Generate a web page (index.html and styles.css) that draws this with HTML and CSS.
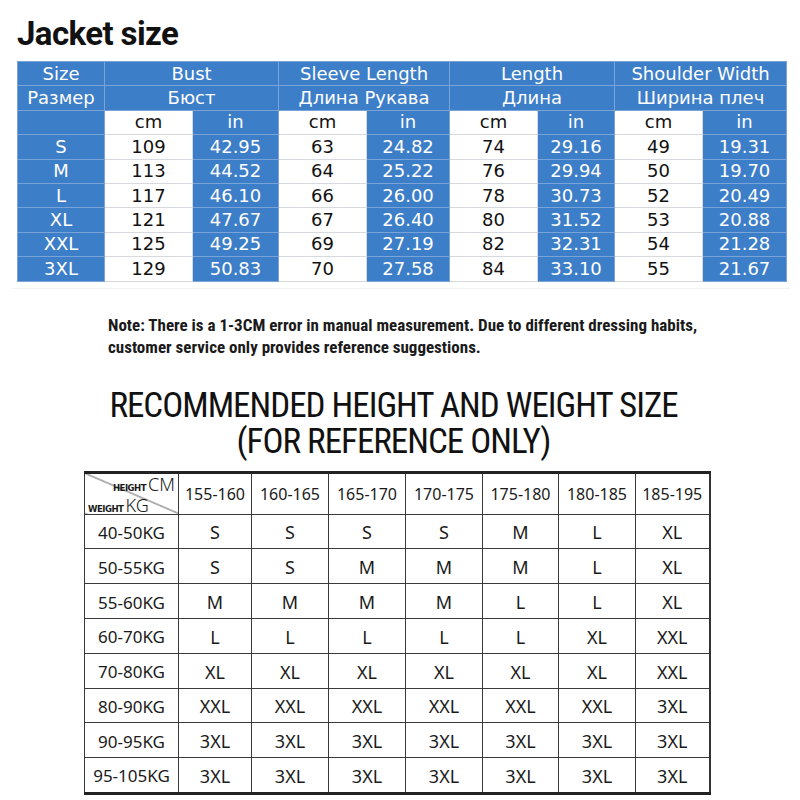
FILE: index.html
```html
<!DOCTYPE html>
<html>
<head>
<meta charset="utf-8">
<link rel="stylesheet" href="styles.css">
</head>
<body>
<div class="page">
  <h1 class="jacket-title">Jacket size</h1>
  <table class="size-table">
    <colgroup>
      <col class="c87"><col class="c88"><col class="c86"><col class="c88"><col class="c83"><col class="c88"><col class="c77"><col class="c88"><col class="c84">
    </colgroup>
    <tr><td class="b">Size</td><td class="b" colspan="2">Bust</td><td class="b" colspan="2">Sleeve Length</td><td class="b" colspan="2">Length</td><td class="b" colspan="2">Shoulder Width</td></tr>
    <tr><td class="b">Размер</td><td class="b" colspan="2">Бюст</td><td class="b" colspan="2">Длина Рукава</td><td class="b" colspan="2">Длина</td><td class="b" colspan="2">Ширина плеч</td></tr>
    <tr><td class="b"></td><td class="w">cm</td><td class="b">in</td><td class="w">cm</td><td class="b">in</td><td class="w">cm</td><td class="b">in</td><td class="w">cm</td><td class="b">in</td></tr>
    <tr><td class="b">S</td><td class="w">109</td><td class="b">42.95</td><td class="w">63</td><td class="b">24.82</td><td class="w">74</td><td class="b">29.16</td><td class="w">49</td><td class="b">19.31</td></tr>
    <tr><td class="b">M</td><td class="w">113</td><td class="b">44.52</td><td class="w">64</td><td class="b">25.22</td><td class="w">76</td><td class="b">29.94</td><td class="w">50</td><td class="b">19.70</td></tr>
    <tr><td class="b">L</td><td class="w">117</td><td class="b">46.10</td><td class="w">66</td><td class="b">26.00</td><td class="w">78</td><td class="b">30.73</td><td class="w">52</td><td class="b">20.49</td></tr>
    <tr><td class="b">XL</td><td class="w">121</td><td class="b">47.67</td><td class="w">67</td><td class="b">26.40</td><td class="w">80</td><td class="b">31.52</td><td class="w">53</td><td class="b">20.88</td></tr>
    <tr><td class="b">XXL</td><td class="w">125</td><td class="b">49.25</td><td class="w">69</td><td class="b">27.19</td><td class="w">82</td><td class="b">32.31</td><td class="w">54</td><td class="b">21.28</td></tr>
    <tr><td class="b">3XL</td><td class="w">129</td><td class="b">50.83</td><td class="w">70</td><td class="b">27.58</td><td class="w">84</td><td class="b">33.10</td><td class="w">55</td><td class="b">21.67</td></tr>
  </table>
  <div class="divider"></div>
  <p class="note">Note: There is a 1-3CM error in manual measurement. Due to different dressing habits,<br>customer service only provides reference suggestions.</p>
  <h2 class="rec-title">RECOMMENDED HEIGHT AND WEIGHT SIZE<br>(FOR REFERENCE ONLY)</h2>
  <table class="rec-table">
    <colgroup>
      <col class="r94"><col class="r73"><col class="r77"><col class="r77"><col class="r77"><col class="r76"><col class="r77"><col class="r74">
    </colgroup>
    <tr class="head">
      <td class="corner">
        <div class="corner-box">
          <div class="corner-top"><span class="tiny">HEIGHT</span><span class="unit">CM</span></div>
          <div class="corner-bottom"><span class="tiny">WEIGHT</span><span class="unit">KG</span></div>
        </div>
      </td>
      <td>155-160</td><td>160-165</td><td>165-170</td><td>170-175</td><td>175-180</td><td>180-185</td><td>185-195</td>
    </tr>
    <tr><th>40-50KG</th><td>S</td><td>S</td><td>S</td><td>S</td><td>M</td><td>L</td><td>XL</td></tr>
    <tr><th>50-55KG</th><td>S</td><td>S</td><td>M</td><td>M</td><td>M</td><td>L</td><td>XL</td></tr>
    <tr><th>55-60KG</th><td>M</td><td>M</td><td>M</td><td>M</td><td>L</td><td>L</td><td>XL</td></tr>
    <tr><th>60-70KG</th><td>L</td><td>L</td><td>L</td><td>L</td><td>L</td><td>XL</td><td>XXL</td></tr>
    <tr><th>70-80KG</th><td>XL</td><td>XL</td><td>XL</td><td>XL</td><td>XL</td><td>XL</td><td>XXL</td></tr>
    <tr><th>80-90KG</th><td>XXL</td><td>XXL</td><td>XXL</td><td>XXL</td><td>XXL</td><td>XXL</td><td>3XL</td></tr>
    <tr><th>90-95KG</th><td>3XL</td><td>3XL</td><td>3XL</td><td>3XL</td><td>3XL</td><td>3XL</td><td>3XL</td></tr>
    <tr><th>95-105KG</th><td>3XL</td><td>3XL</td><td>3XL</td><td>3XL</td><td>3XL</td><td>3XL</td><td>3XL</td></tr>
  </table>
</div>
</body>
</html>
```
FILE: styles.css
```css
html, body {
  margin: 0;
  padding: 0;
  background: #ffffff;
}
.page {
  width: 800px;
  height: 800px;
  overflow: hidden;
  box-sizing: border-box;
  padding-top: 17px;
}
.jacket-title {
  margin: 0 0 11px 17px;
  font-family: Roboto, "Liberation Sans", sans-serif;
  font-weight: 700;
  font-size: 33px;
  line-height: 33px;
  letter-spacing: -0.6px;
  color: #111;
}
.size-table {
  margin-left: 17px;
  width: 769px;
  table-layout: fixed;
  border-collapse: collapse;
  font-family: "DejaVu Sans", sans-serif;
  font-size: 18px;
}
.c87 { width: 87px; }
.c88 { width: 88px; }
.c86 { width: 86px; }
.c83 { width: 83px; }
.c77 { width: 77px; }
.c84 { width: 84px; }
.size-table td {
  height: 23.4px;
  padding: 0;
  text-align: center;
  line-height: 22px;
  border: 1px solid #c4d3e6;
  white-space: nowrap;
}
.size-table td.b {
  background: #3d7ec9;
  color: #ffffff;
  border-color: #7aa3d8;
}
.size-table td.w {
  background: #ffffff;
  color: #111;
  border-color: #d6d9de;
}
.divider {
  margin: 6px 10px 0 12px;
  height: 1px;
  background: #f3f3f3;
}
.note {
  margin: 25px 0 0 108px;
  font-family: "Roboto Condensed", "Liberation Sans Narrow", "DejaVu Sans", sans-serif;
  font-stretch: condensed;
  font-weight: 700;
  font-size: 17px;
  line-height: 22px;
  color: #1a1a1a;
}
.rec-title {
  margin: 30px 0 0 81px;
  width: 625px;
  text-align: center;
  font-family: "Roboto Condensed", "Liberation Sans Narrow", "DejaVu Sans", sans-serif;
  font-stretch: condensed;
  font-weight: 400;
  font-size: 35px;
  line-height: 36px;
  letter-spacing: -1px;
  color: #111;
}
.rec-table {
  margin: 11px 0 0 84px;
  width: 625px;
  table-layout: fixed;
  border-collapse: collapse;
  font-family: "Noto Sans", sans-serif;
  color: #1a1a1a;
  border-top: 3px solid #222;
  border-bottom: 3px solid #222;
  border-left: 1.5px solid #333;
  border-right: 2px solid #333;
}
.r94 { width: 94px; }
.r73 { width: 73px; }
.r77 { width: 77px; }
.r76 { width: 76px; }
.r74 { width: 74px; }
.rec-table td, .rec-table th {
  border: 1.5px solid #3a3a3a;
  padding: 2px 0 0 0;
  text-align: center;
  height: 31.8px;
  font-size: 18px;
  font-weight: 400;
  white-space: nowrap;
}
.rec-table th {
  font-size: 17px;
}
.rec-table tr.head td {
  height: 40px;
  padding: 0;
  font-size: 16px;
}
.rec-table td.corner {
  padding: 0;
  background: linear-gradient(to top right, transparent calc(50% - 0.8px), #444 50%, transparent calc(50% + 0.8px));
}
.corner-box {
  height: 40px;
  display: flex;
  flex-direction: column;
  justify-content: space-between;
  padding: 1px 3px 0 3px;
  box-sizing: border-box;
}
.corner-top {
  display: flex;
  justify-content: flex-end;
  align-items: baseline;
}
.corner-bottom {
  display: flex;
  justify-content: flex-start;
  align-items: baseline;
}
.tiny {
  font-family: "DejaVu Sans", sans-serif;
  font-stretch: condensed;
  font-weight: 700;
  font-size: 9.5px;
  letter-spacing: -0.5px;
}
.unit {
  font-family: "Noto Sans", sans-serif;
  font-weight: 300;
  font-size: 18px;
  line-height: 18px;
  margin-left: 2px;
}
```
